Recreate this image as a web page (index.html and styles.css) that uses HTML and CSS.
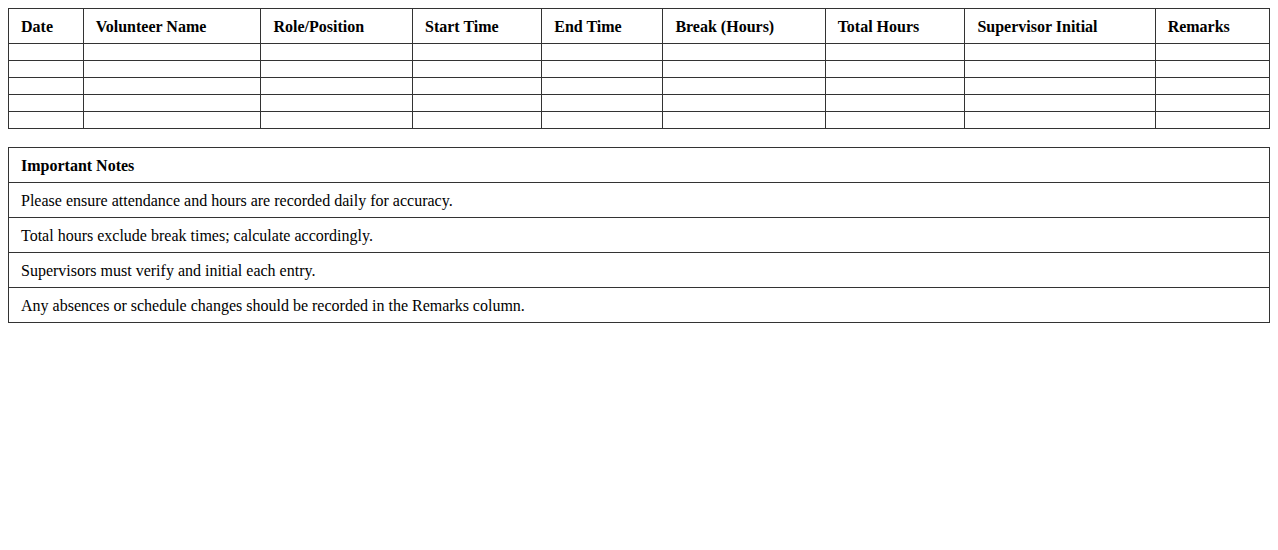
FILE: index.html
```html
<!DOCTYPE html>
<html lang="en">
<head>
<meta charset="utf-8">
<title>Volunteer Timesheet</title>
<link rel="stylesheet" href="styles.css">
</head>
<body>
<table class="sheet">
  <thead>
    <tr>
      <th>Date</th>
      <th>Volunteer Name</th>
      <th>Role/Position</th>
      <th>Start Time</th>
      <th>End Time</th>
      <th>Break (Hours)</th>
      <th>Total Hours</th>
      <th>Supervisor Initial</th>
      <th>Remarks</th>
    </tr>
  </thead>
  <tbody>
    <tr><td></td><td></td><td></td><td></td><td></td><td></td><td></td><td></td><td></td></tr>
    <tr><td></td><td></td><td></td><td></td><td></td><td></td><td></td><td></td><td></td></tr>
    <tr><td></td><td></td><td></td><td></td><td></td><td></td><td></td><td></td><td></td></tr>
    <tr><td></td><td></td><td></td><td></td><td></td><td></td><td></td><td></td><td></td></tr>
    <tr><td></td><td></td><td></td><td></td><td></td><td></td><td></td><td></td><td></td></tr>
  </tbody>
</table>
<table class="sheet notes">
  <thead>
    <tr><th>Important Notes</th></tr>
  </thead>
  <tbody>
    <tr><td>Please ensure attendance and hours are recorded daily for accuracy.</td></tr>
    <tr><td>Total hours exclude break times; calculate accordingly.</td></tr>
    <tr><td>Supervisors must verify and initial each entry.</td></tr>
    <tr><td>Any absences or schedule changes should be recorded in the Remarks column.</td></tr>
  </tbody>
</table>
</body>
</html>
```
FILE: styles.css
```css
body {
  margin: 8px;
  font-family: "Liberation Serif", "Times New Roman", serif;
  font-size: 16px;
  color: #000;
  background: #fff;
}
.sheet {
  width: 100%;
  border-collapse: collapse;
  margin-bottom: 18px;
}
.sheet th,
.sheet td {
  border: 1px solid #333;
  padding: 9px 12px 7px;
  text-align: left;
  line-height: 18px;
}
.sheet th {
  font-weight: bold;
}
```
